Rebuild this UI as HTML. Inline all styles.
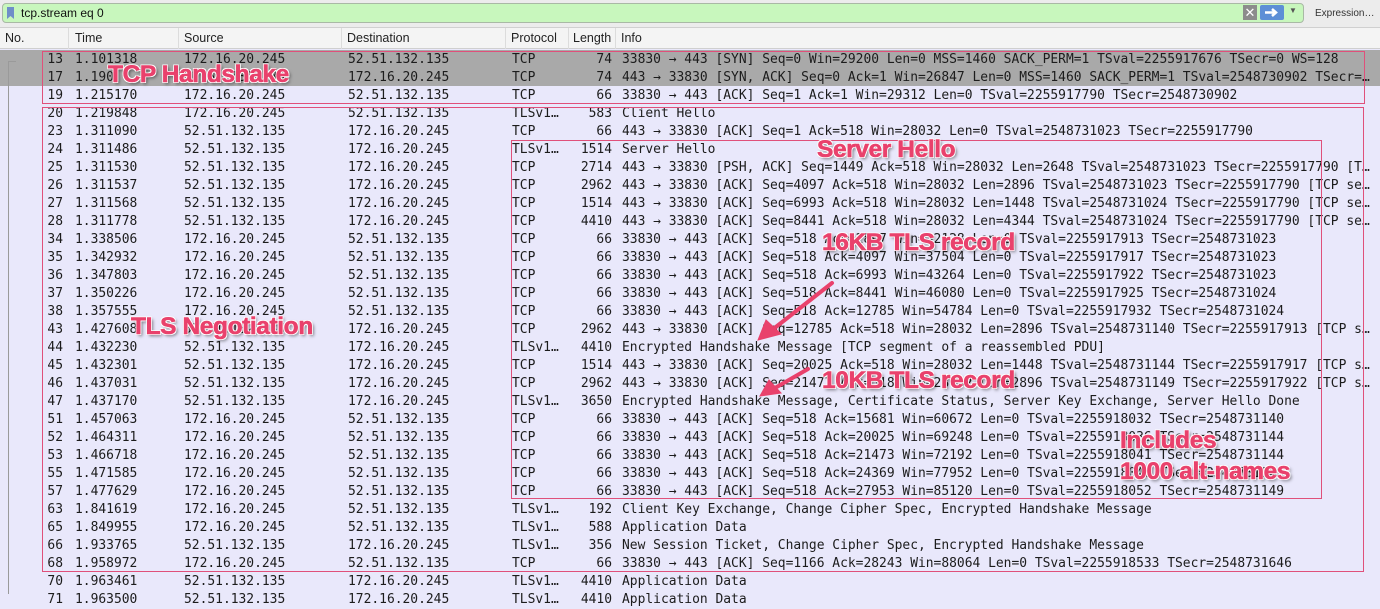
<!DOCTYPE html>
<html><head><meta charset="utf-8"><style>
*{margin:0;padding:0;box-sizing:border-box}
body{width:1380px;height:594px;overflow:hidden;background:#e9e8fb;font-family:"Liberation Sans",sans-serif;position:relative}
#top{position:absolute;left:0;top:0;width:1380px;height:28px;background:#ececec;border-bottom:1px solid #d0d0d0}
#filter{position:absolute;left:2px;top:3px;width:1302px;height:20px;background:#c8f7bd;border:1px solid #a9b9a5;border-radius:4px}
#filter .bm{position:absolute;left:4px;top:3px;width:7px;height:12px;background:#6f8fc8;clip-path:polygon(0 0,100% 0,100% 100%,50% 75%,0 100%)}
#filter .t{position:absolute;left:18px;top:2px;font-size:12px;color:#111}
#xbtn{position:absolute;left:1243px;top:5px;width:14px;height:15px;background:#8c8c8c;color:#fff;font-size:13px;line-height:15px;text-align:center}
#arr{position:absolute;left:1260px;top:5px;width:24px;height:15px;background:#5d8fd6;border-radius:2px}
#dd{position:absolute;left:1289px;top:6px;font-size:8px;color:#555}
#expr{position:absolute;left:1315px;top:8px;font-size:10px;color:#333}
#hdr{position:absolute;left:0;top:28px;width:1380px;height:21px;background:#f4f4f4;border-bottom:1px solid #cfcfcf;font-size:12.5px;color:#222}
#hdr span{position:absolute;top:3px}
#hdr i{position:absolute;top:0;width:1px;height:21px;background:#dcdcdc}
.row{position:absolute;left:0;width:1380px;height:18px;font-family:"DejaVu Sans Mono","Liberation Mono",monospace;font-size:12.95px;color:#1c1c1c;line-height:18px;white-space:pre}
.row span{position:absolute;top:1px}
.sel{background:#a9a9a9}
.n{right:1317px;text-align:right}
.tm{left:75px}.sr{left:184px}.ds{left:348px}.pr{left:512px}
.ln{right:768px;text-align:right}
.in{left:622px;width:750px;overflow:hidden;text-overflow:ellipsis}
.box{position:absolute;border:1.5px solid #e0507a}
.lab{position:absolute;font-family:"Liberation Sans",sans-serif;font-weight:bold;font-size:24.5px;color:#e9416c;-webkit-text-stroke:0.6px #e9416c;text-shadow:1px 1px 0 #fff,-1px -1px 0 #fff,1px -1px 0 #fff,-1px 1px 0 #fff,2px 2px 3px rgba(0,0,0,.5);white-space:nowrap;letter-spacing:-0.4px}
</style></head><body>
<div id="top">
<div id="filter"><div class="bm"></div><div class="t">tcp.stream eq 0</div></div>
<div id="xbtn">✕</div>
<div id="arr"><svg width="24" height="15"><path d="M5 7.5h10M12 4l4 3.5-4 3.5" stroke="#fff" stroke-width="2.5" fill="none"/></svg></div>
<div id="dd">▼</div>
<div id="expr">Expression…</div>
</div>
<div id="hdr">
<span style="left:5px">No.</span><i style="left:68px"></i>
<span style="left:75px">Time</span><i style="left:178px"></i>
<span style="left:184px">Source</span><i style="left:341px"></i>
<span style="left:347px">Destination</span><i style="left:505px"></i>
<span style="left:511px">Protocol</span><i style="left:568px"></i>
<span style="left:573px;width:42px;overflow:hidden">Length</span><i style="left:615px"></i>
<span style="left:621px">Info</span>
</div>
<div id="rows"></div>
<div style="position:absolute;left:8px;top:61px;width:1px;height:533px;background:#9a9a9a"></div>
<div style="position:absolute;left:8px;top:61px;width:8px;height:1px;background:#9a9a9a"></div>

<div class="box" style="left:42px;top:51px;width:1323px;height:53px"></div>
<div class="box" style="left:42px;top:107px;width:1322px;height:465px"></div>
<div class="box" style="left:511px;top:140px;width:811px;height:359px"></div>

<svg style="position:absolute;left:0;top:0" width="1380" height="594">
<g stroke="#e9416c" stroke-width="4" fill="#e9416c" stroke-linecap="round">
<line x1="832" y1="283" x2="772" y2="330"/>
<polygon points="758,340 766,320 781,334" stroke-width="1"/>
<line x1="808" y1="369" x2="775" y2="388"/>
<polygon points="760,396 769,380 781,393" stroke-width="1"/>
</g></svg>

<div class="lab" style="left:108px;top:61px">TCP Handshake</div>
<div class="lab" style="left:817px;top:136px">Server Hello</div>
<div class="lab" style="left:822px;top:229px">16KB TLS record</div>
<div class="lab" style="left:131px;top:313px">TLS Negotiation</div>
<div class="lab" style="left:822px;top:367px">10KB TLS record</div>
<div class="lab" style="left:1120px;top:427px">Includes</div>
<div class="lab" style="left:1120px;top:458px">1000 alt-names</div>

<script>
var A="172.16.20.245",B="52.51.132.135";
var d=[
[13,"1.101318",A,B,"TCP",74,"33830 → 443 [SYN] Seq=0 Win=29200 Len=0 MSS=1460 SACK_PERM=1 TSval=2255917676 TSecr=0 WS=128"],
[17,"1.190",B,A,"TCP",74,"443 → 33830 [SYN, ACK] Seq=0 Ack=1 Win=26847 Len=0 MSS=1460 SACK_PERM=1 TSval=2548730902 TSecr=0 WS=128"],
[19,"1.215170",A,B,"TCP",66,"33830 → 443 [ACK] Seq=1 Ack=1 Win=29312 Len=0 TSval=2255917790 TSecr=2548730902"],
[20,"1.219848",A,B,"TLSv1…",583,"Client Hello"],
[23,"1.311090",B,A,"TCP",66,"443 → 33830 [ACK] Seq=1 Ack=518 Win=28032 Len=0 TSval=2548731023 TSecr=2255917790"],
[24,"1.311486",B,A,"TLSv1…",1514,"Server Hello"],
[25,"1.311530",B,A,"TCP",2714,"443 → 33830 [PSH, ACK] Seq=1449 Ack=518 Win=28032 Len=2648 TSval=2548731023 TSecr=2255917790 [TCP segment]"],
[26,"1.311537",B,A,"TCP",2962,"443 → 33830 [ACK] Seq=4097 Ack=518 Win=28032 Len=2896 TSval=2548731023 TSecr=2255917790 [TCP segment]"],
[27,"1.311568",B,A,"TCP",1514,"443 → 33830 [ACK] Seq=6993 Ack=518 Win=28032 Len=1448 TSval=2548731024 TSecr=2255917790 [TCP segment]"],
[28,"1.311778",B,A,"TCP",4410,"443 → 33830 [ACK] Seq=8441 Ack=518 Win=28032 Len=4344 TSval=2548731024 TSecr=2255917790 [TCP segment]"],
[34,"1.338506",A,B,"TCP",66,"33830 → 443 [ACK] Seq=518 Ack=2897 Win=32128 Len=0 TSval=2255917913 TSecr=2548731023"],
[35,"1.342932",A,B,"TCP",66,"33830 → 443 [ACK] Seq=518 Ack=4097 Win=37504 Len=0 TSval=2255917917 TSecr=2548731023"],
[36,"1.347803",A,B,"TCP",66,"33830 → 443 [ACK] Seq=518 Ack=6993 Win=43264 Len=0 TSval=2255917922 TSecr=2548731023"],
[37,"1.350226",A,B,"TCP",66,"33830 → 443 [ACK] Seq=518 Ack=8441 Win=46080 Len=0 TSval=2255917925 TSecr=2548731024"],
[38,"1.357555",A,B,"TCP",66,"33830 → 443 [ACK] Seq=518 Ack=12785 Win=54784 Len=0 TSval=2255917932 TSecr=2548731024"],
[43,"1.427608",B,A,"TCP",2962,"443 → 33830 [ACK] Seq=12785 Ack=518 Win=28032 Len=2896 TSval=2548731140 TSecr=2255917913 [TCP segment]"],
[44,"1.432230",B,A,"TLSv1…",4410,"Encrypted Handshake Message [TCP segment of a reassembled PDU]"],
[45,"1.432301",B,A,"TCP",1514,"443 → 33830 [ACK] Seq=20025 Ack=518 Win=28032 Len=1448 TSval=2548731144 TSecr=2255917917 [TCP segment]"],
[46,"1.437031",B,A,"TCP",2962,"443 → 33830 [ACK] Seq=21473 Ack=518 Win=28032 Len=2896 TSval=2548731149 TSecr=2255917922 [TCP segment]"],
[47,"1.437170",B,A,"TLSv1…",3650,"Encrypted Handshake Message, Certificate Status, Server Key Exchange, Server Hello Done"],
[51,"1.457063",A,B,"TCP",66,"33830 → 443 [ACK] Seq=518 Ack=15681 Win=60672 Len=0 TSval=2255918032 TSecr=2548731140"],
[52,"1.464311",A,B,"TCP",66,"33830 → 443 [ACK] Seq=518 Ack=20025 Win=69248 Len=0 TSval=2255918036 TSecr=2548731144"],
[53,"1.466718",A,B,"TCP",66,"33830 → 443 [ACK] Seq=518 Ack=21473 Win=72192 Len=0 TSval=2255918041 TSecr=2548731144"],
[55,"1.471585",A,B,"TCP",66,"33830 → 443 [ACK] Seq=518 Ack=24369 Win=77952 Len=0 TSval=2255918046 TSecr=2548731149"],
[57,"1.477629",A,B,"TCP",66,"33830 → 443 [ACK] Seq=518 Ack=27953 Win=85120 Len=0 TSval=2255918052 TSecr=2548731149"],
[63,"1.841619",A,B,"TLSv1…",192,"Client Key Exchange, Change Cipher Spec, Encrypted Handshake Message"],
[65,"1.849955",A,B,"TLSv1…",588,"Application Data"],
[66,"1.933765",B,A,"TLSv1…",356,"New Session Ticket, Change Cipher Spec, Encrypted Handshake Message"],
[68,"1.958972",A,B,"TCP",66,"33830 → 443 [ACK] Seq=1166 Ack=28243 Win=88064 Len=0 TSval=2255918533 TSecr=2548731646"],
[70,"1.963461",B,A,"TLSv1…",4410,"Application Data"],
[71,"1.963500",B,A,"TLSv1…",4410,"Application Data"]
];
var h="";
d.forEach(function(r,i){
h+='<div class="row'+(i<2?' sel':'')+'" style="top:'+(50+i*18)+'px"><span class="n">'+r[0]+'</span><span class="tm">'+r[1]+'</span><span class="sr">'+r[2]+'</span><span class="ds">'+r[3]+'</span><span class="pr">'+r[4]+'</span><span class="ln">'+r[5]+'</span><span class="in">'+r[6]+'</span></div>';
});
document.getElementById("rows").innerHTML=h;
</script>
</body></html>
